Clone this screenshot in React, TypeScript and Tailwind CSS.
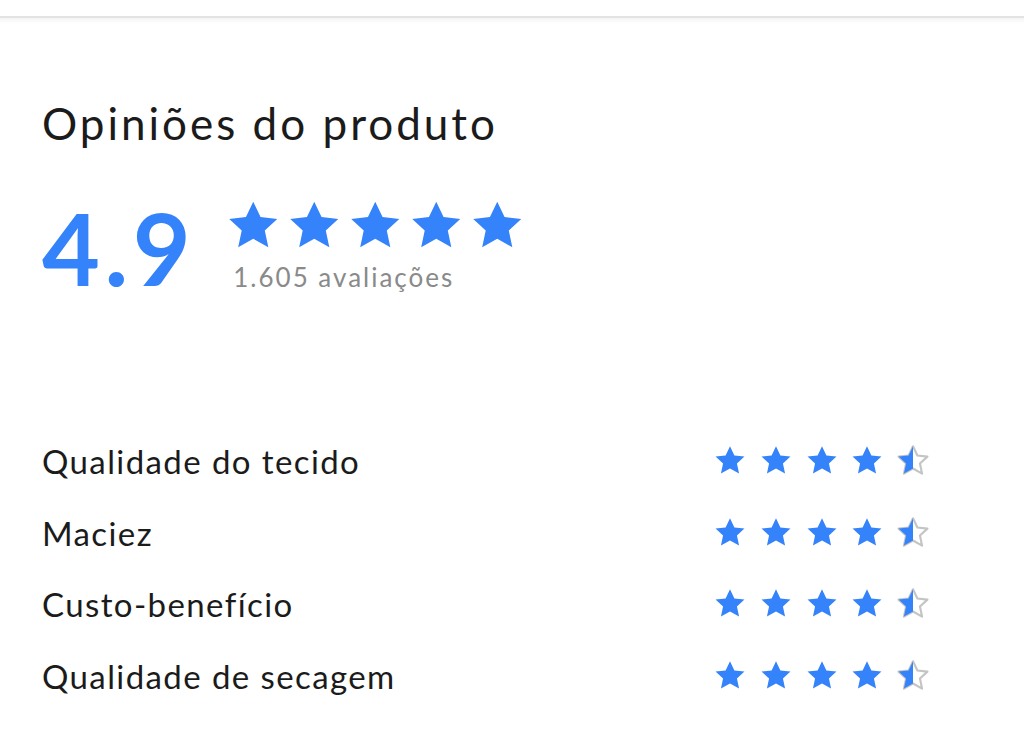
import React from "react";

const STAR = "12,1.6 15.1,8.1 22.2,8.9 16.9,13.8 18.4,20.9 12,17.3 5.6,20.9 7.1,13.8 1.8,8.9 8.9,8.1";

function Star({ size, half = false, id }: { size: number; half?: boolean; id?: string }) {
  if (!half) {
    return (
      <svg width={size} height={size} viewBox="0 0 24 24" className="shrink-0">
        <polygon points={STAR} fill="#3483fa" />
      </svg>
    );
  }
  return (
    <svg width={size} height={size} viewBox="0 0 24 24" className="shrink-0">
      <defs>
        <clipPath id={id}>
          <rect x="0" y="0" width="12" height="24" />
        </clipPath>
      </defs>
      <polygon points={STAR} fill="none" stroke="#c4c4c4" strokeWidth="1.5" strokeLinejoin="round" />
      <polygon points={STAR} fill="#3483fa" clipPath={`url(#${id})`} />
    </svg>
  );
}

const rows = ["Qualidade do tecido", "Maciez", "Custo-benefício", "Qualidade de secagem"];

export default function App() {
  return (
    <div className="w-[1024px] h-[730px] bg-white overflow-hidden" style={{ fontFamily: "Lato, 'Noto Sans', sans-serif" }}>
      <div className="h-[18px] border-b-2 border-[#e3e3e3]" />
      <div className="h-[6px] bg-gradient-to-b from-[#f4f4f4] to-white" />
      <div className="pl-[42px] pr-[94px]">
        <h2 className="mt-[74px] text-[44px] leading-[50px] tracking-[3px] text-[#1b1b1b] font-normal">Opiniões do produto</h2>
        <div className="mt-[49px] flex items-start">
          <div className="text-[100px] leading-[100px] font-bold text-[#3483fa] tracking-[4.5px]">4.9</div>
          <div className="ml-[30px] mt-[1px] flex flex-col">
            <div className="flex gap-[4.5px]">
              {[0, 1, 2, 3, 4].map((i) => (
                <Star key={i} size={56.5} />
              ))}
            </div>
            <div className="mt-[6px] ml-[8px] text-[26px] leading-[32px] tracking-[2px] text-[#8a8a8a]">1.605 avaliações</div>
          </div>
        </div>
        <div className="mt-[144px] flex flex-col gap-[31.5px]">
          {rows.map((r, idx) => (
            <div key={r} className="flex items-center justify-between h-[40px]">
              <span className="text-[33px] leading-[40px] tracking-[1.4px] text-[#1b1b1b]">{r}</span>
              <div className="flex gap-[11.7px]">
                {[0, 1, 2, 3].map((i) => (
                  <Star key={i} size={34} />
                ))}
                <Star size={34} half id={`half-${idx}`} />
              </div>
            </div>
          ))}
        </div>
      </div>
    </div>
  );
}
